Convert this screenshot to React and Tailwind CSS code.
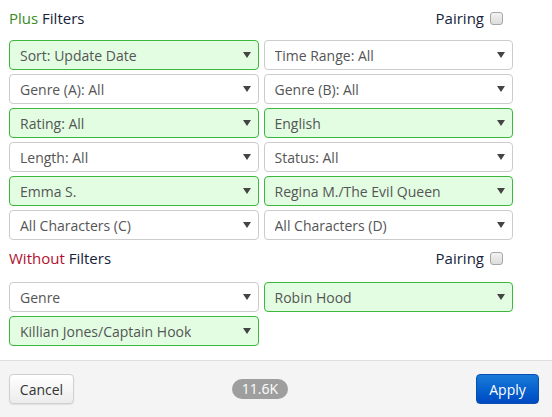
import React from 'react';

const Caret = () => (
  <svg width="8" height="6" viewBox="0 0 8 6" className="shrink-0">
    <path d="M0 0 L8 0 L4 6 Z" fill="#444" />
  </svg>
);

const Select = ({ label, active }) => (
  <div
    className={`h-[30px] flex items-center justify-between pl-[10px] pr-[7px] rounded-[4px] border text-[14px] text-[#555] ${
      active ? 'border-[#3db83d] bg-[#e2fde2]' : 'border-[#cccccc] bg-white'
    }`}
  >
    <span className="truncate">{label}</span>
    <Caret />
  </div>
);

const Header = ({ first, color }) => (
  <div className="flex items-center justify-between h-[18px] pr-[10px]">
    <div className="text-[15px]">
      <span style={{ color }}>{first}</span>{' '}
      <span className="text-[#16233a]">Filters</span>
    </div>
    <label className="flex items-center gap-[6px] text-[15px] text-[#16233a]">
      Pairing
      <span className="w-[13px] h-[13px] rounded-[3px] border border-[#a6a6a6] bg-gradient-to-b from-[#f2f2f2] to-[#dcdcdc]" />
    </label>
  </div>
);

export default function App() {
  const plus = [
    ['Sort: Update Date', true],
    ['Time Range: All', false],
    ['Genre (A): All', false],
    ['Genre (B): All', false],
    ['Rating: All', true],
    ['English', true],
    ['Length: All', false],
    ['Status: All', false],
    ['Emma S.', true],
    ['Regina M./The Evil Queen', true],
    ['All Characters (C)', false],
    ['All Characters (D)', false],
  ];
  const without = [
    ['Genre', false],
    ['Robin Hood', true],
    ['Killian Jones/Captain Hook', true],
  ];

  return (
    <div className="w-[552px] h-[417px] bg-white flex flex-col" style={{ fontFamily: '"Open Sans", sans-serif' }}>
      <div className="flex-1 pl-[9px] pr-[39px] pt-[9px]">
        <Header first="Plus" color="#3b8a1e" />
        <div className="grid grid-cols-2 gap-x-[5px] gap-y-[4px] mt-[13px]">
          {plus.map(([l, a]) => (
            <Select key={l} label={l} active={a} />
          ))}
        </div>
        <div className="mt-[9px]">
          <Header first="Without" color="#b0102e" />
        </div>
        <div className="grid grid-cols-2 gap-x-[5px] gap-y-[4px] mt-[15px]">
          {without.map(([l, a]) => (
            <Select key={l} label={l} active={a} />
          ))}
        </div>
      </div>
      <div className="h-[57px] border-t border-[#dedede] bg-[#f4f4f4] flex items-center justify-between px-[9px]">
        <button className="h-[30px] w-[65px] rounded-[4px] border border-[#cfcfcf] bg-gradient-to-b from-white to-[#ececec] text-[14px] text-[#333] shadow-[0_1px_1px_rgba(0,0,0,0.08)]">
          Cancel
        </button>
        <span className="h-[20px] px-[10px] rounded-full bg-[#9e9e9e] text-white text-[14px] leading-[20px] mr-[30px]">
          11.6K
        </span>
        <button className="h-[30px] w-[63px] mr-[4px] rounded-[4px] border border-[#0a4fb0] bg-gradient-to-b from-[#1a7ad9] to-[#0049c2] text-white text-[14px]">
          Apply
        </button>
      </div>
    </div>
  );
}
